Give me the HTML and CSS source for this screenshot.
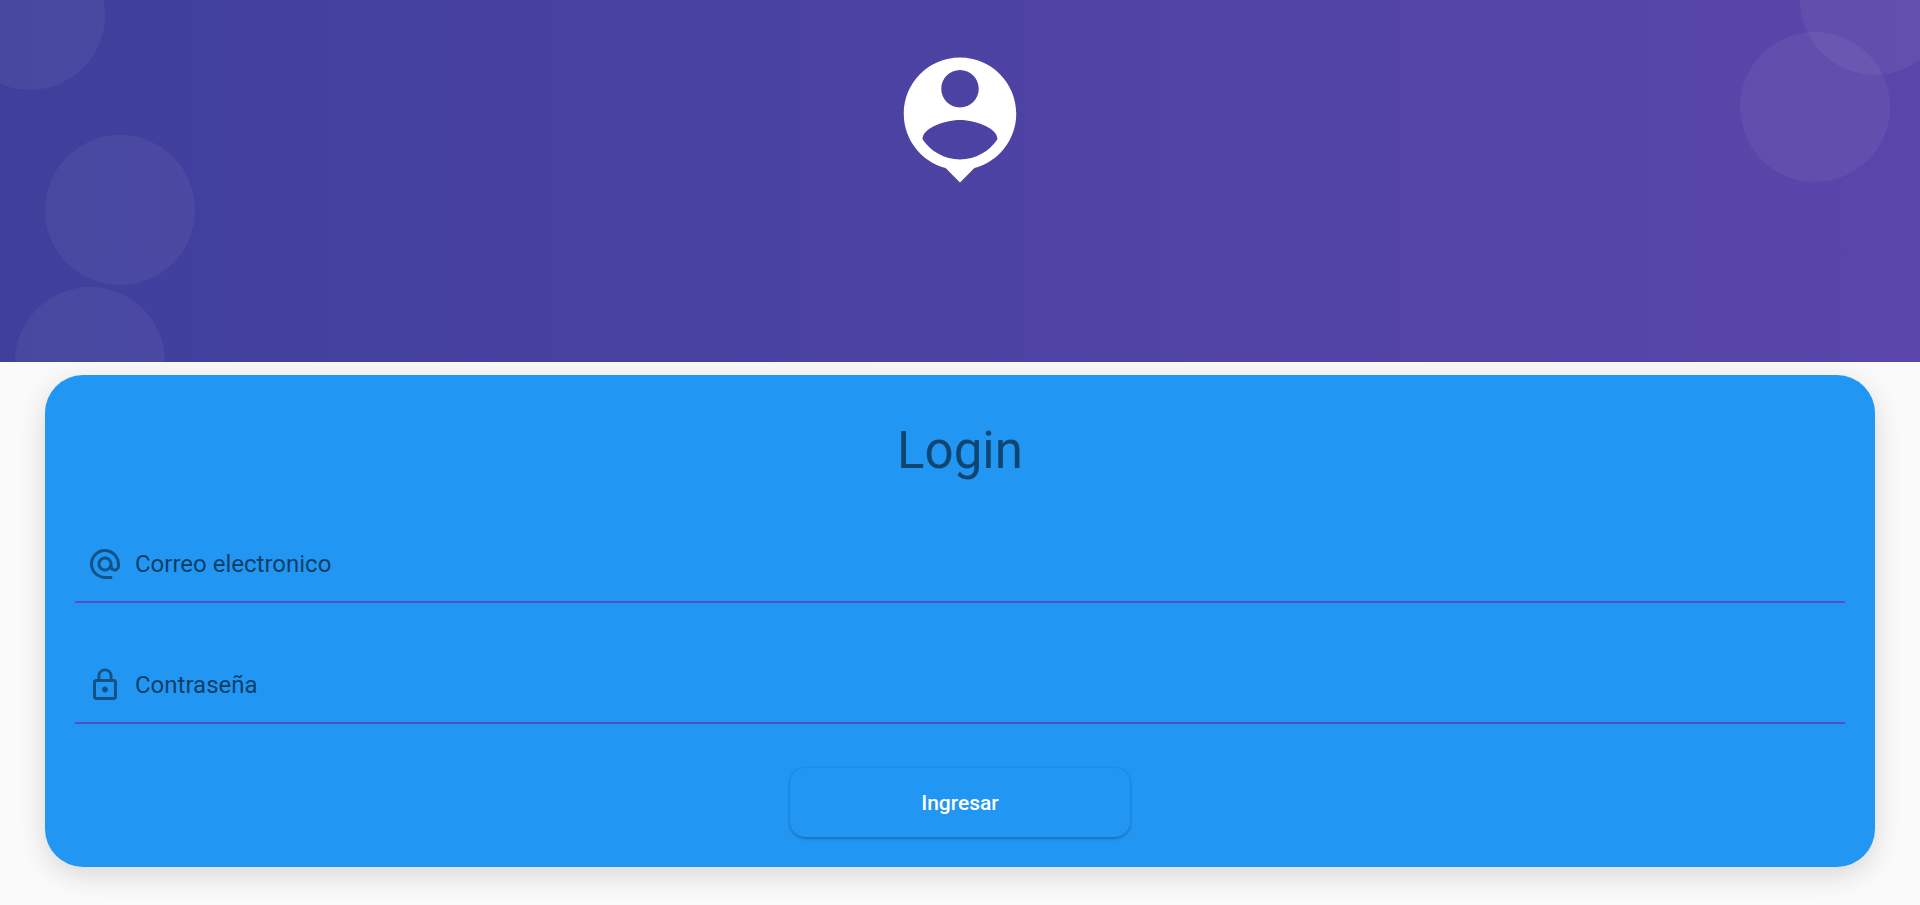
FILE: index.html
```html
<!DOCTYPE html>
<html lang="es">
<head>
<meta charset="utf-8">
<meta name="viewport" content="width=device-width, initial-scale=1">
<title>Login</title>
<link rel="stylesheet" href="styles.css">
</head>
<body>
<header class="banner">
  <span class="bubble bubble-a"></span>
  <span class="bubble bubble-b"></span>
  <span class="bubble bubble-c"></span>
  <span class="bubble bubble-d"></span>
  <span class="bubble bubble-e"></span>
  <svg class="banner-icon" viewBox="0 0 24 24" aria-hidden="true"><path d="M12 2c-4.970 0-9 4.030-9 9 0 4.170 2.840 7.670 6.690 8.690L12 22l2.310-2.310C18.160 18.670 21 15.170 21 11c0-4.970-4.030-9-9-9zm0 2c1.660 0 3 1.340 3 3s-1.340 3-3 3-3-1.340-3-3 1.340-3 3-3zm0 14.300c-2.500 0-4.710-1.280-6-3.220.03-1.990 4-3.080 6-3.080 1.990 0 5.970 1.090 6 3.080-1.290 1.940-3.500 3.220-6 3.220z"/></svg>
</header>
<main class="content">
  <form class="card">
    <h1 class="title">Login</h1>
    <label class="field">
      <svg class="field-icon" viewBox="0 0 24 24" aria-hidden="true"><path d="M12.720 2.030C6.630 1.600 1.600 6.630 2.030 12.720 2.390 18.010 7.010 22 12.310 22H16c.55 0 1-.45 1-1s-.45-1-1-1h-3.670c-3.730 0-7.150-2.420-8.080-6.030-1.490-5.800 3.910-11.210 9.710-9.710C17.580 5.180 20 8.600 20 12.330v1.100c0 .79-.71 1.570-1.500 1.570s-1.500-.78-1.500-1.570v-1.250c0-2.510-1.780-4.770-4.260-5.120-3.400-.49-6.270 2.450-5.660 5.870.34 1.910 1.830 3.490 3.720 3.940 1.840.43 3.590-.16 4.740-1.330.89 1.220 2.670 1.860 4.300 1.210 1.340-.53 2.160-1.900 2.160-3.340v-1.090c0-5.310-3.990-9.930-9.280-10.290zM12 15c-1.660 0-3-1.340-3-3s1.340-3 3-3 3 1.340 3 3-1.340 3-3 3z"/></svg>
      <input class="field-input" type="email" name="email" placeholder="Correo electronico" aria-label="Correo electronico">
    </label>
    <label class="field">
      <svg class="field-icon" viewBox="0 0 24 24" aria-hidden="true"><path d="M12 17c1.100 0 2-.9 2-2s-.9-2-2-2-2 .9-2 2 .9 2 2 2zm6-9h-1V6c0-2.760-2.240-5-5-5S7 3.240 7 6v2H6c-1.100 0-2 .9-2 2v10c0 1.100.9 2 2 2h12c1.100 0 2-.9 2-2V10c0-1.100-.9-2-2-2zM8.900 6c0-1.710 1.390-3.100 3.100-3.100s3.100 1.390 3.100 3.100v2H8.900V6zM18 20H6V10h12v10z"/></svg>
      <input class="field-input" type="password" name="password" placeholder="Contraseña" aria-label="Contraseña">
    </label>
    <button class="submit" type="submit">Ingresar</button>
  </form>
</main>
</body>
</html>
```
FILE: styles.css
```css
* {
  box-sizing: border-box;
}

body {
  margin: 0;
  min-height: 100vh;
  background: #fafafa;
  font-family: Roboto, "Liberation Sans", sans-serif;
}

.banner {
  position: relative;
  display: flex;
  justify-content: center;
  align-items: flex-start;
  height: 40vh;
  padding-top: 45px;
  overflow: hidden;
  background: linear-gradient(to right, #3f3f9c, #5a46aa);
}

.banner-icon {
  width: 150px;
  height: 150px;
  fill: #fff;
}

.bubble {
  position: absolute;
  width: 150px;
  height: 150px;
  border-radius: 50%;
  background: rgba(255, 255, 255, 0.05);
}

.bubble-a { top: -60px; left: -45px; }
.bubble-b { top: 135px; left: 45px; }
.bubble-c { bottom: -75px; left: 15px; }
.bubble-d { top: 32px; right: 30px; }
.bubble-e { top: -75px; right: -30px; }

.content {
  padding: 13px 45px 0;
}

.card {
  display: flex;
  flex-direction: column;
  gap: 44px;
  padding: 45px 30px 30px;
  border-radius: 38px;
  background: #2196f3;
  box-shadow: 0 8px 28px rgba(0, 0, 0, 0.14);
}

.title {
  margin: 0;
  font-size: 51px;
  font-weight: 400;
  line-height: 62px;
  text-align: center;
  color: rgba(0, 0, 0, 0.54);
}

.field {
  display: flex;
  align-items: center;
  gap: 12px;
  height: 77px;
  padding-left: 12px;
  border-bottom: 2px solid #574fca;
}

.field-icon {
  flex: none;
  width: 36px;
  height: 36px;
  fill: rgba(0, 0, 0, 0.45);
}

.field-input {
  flex: 1;
  min-width: 0;
  padding: 0;
  border: 0;
  outline: 0;
  background: transparent;
  font: 400 24px/28px Roboto, "Liberation Sans", sans-serif;
  color: rgba(0, 0, 0, 0.87);
}

.field-input::placeholder {
  color: rgba(0, 0, 0, 0.6);
  opacity: 1;
}

.submit {
  align-self: center;
  width: 340px;
  max-width: 100%;
  height: 69px;
  border: 0;
  border-radius: 15px;
  background: #2196f3;
  box-shadow: 0 2px 3px rgba(0, 0, 0, 0.2), 0 0 3px rgba(0, 0, 0, 0.12);
  font: 500 21px/24px Roboto, "Liberation Sans", sans-serif;
  color: #fff;
}
```
